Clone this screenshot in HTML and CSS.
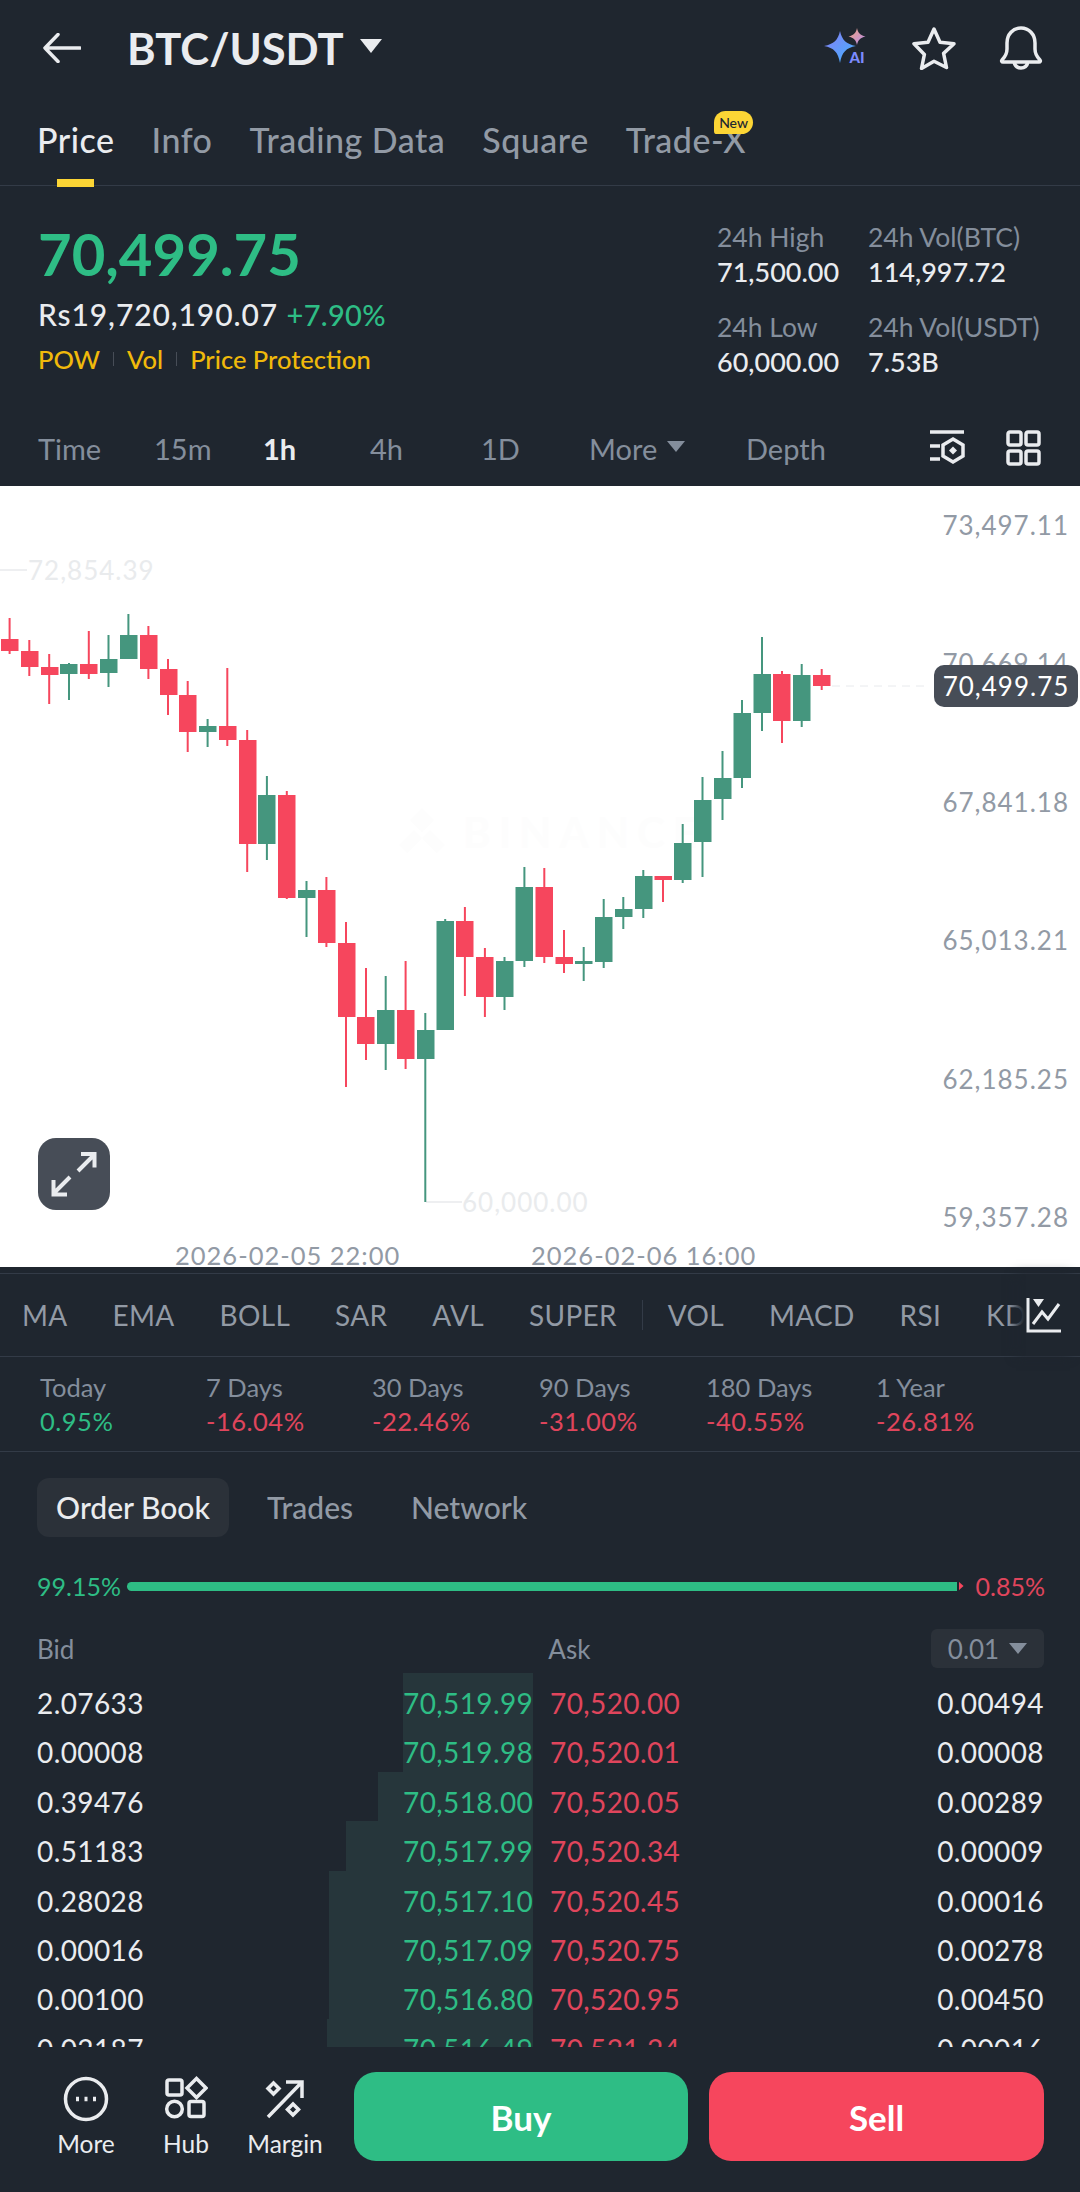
FILE: index.html
```html
<!DOCTYPE html>
<html lang="en">

<head>
    <meta charset="UTF-8">
    <meta name="viewport" content="width=device-width, initial-scale=1.0">
    <title>BTC/USDT</title>
    <link rel="stylesheet" href="styles.css">
</head>

<body>

    <header class="topbar">
        <svg class="back-icon" width="38" height="30" viewBox="0 0 38 30"><path d="M37 15H2M15 1.5L2 15l13 13.5"/></svg>
        <span class="pair">BTC/USDT</span>
        <span class="caret caret-pair"></span>
        <svg class="ai-icon" width="46" height="38" viewBox="0 0 46 38">
            <defs>
                <linearGradient id="sparkBig" x1="0" y1="0" x2="1" y2="1"><stop offset="0" stop-color="#8a7cf5"/><stop offset="1" stop-color="#3fb4ff"/></linearGradient>
                <linearGradient id="sparkSmall" x1="0" y1="0" x2="1" y2="1"><stop offset="0" stop-color="#f2a37c"/><stop offset="1" stop-color="#b58cf0"/></linearGradient>
            </defs>
            <path fill="url(#sparkBig)" d="M17 3c2 9 6 13 16 15-10 2-14 6-16 17-2-11-6-15-16-17 10-2 14-6 16-15z"/>
            <path fill="url(#sparkSmall)" d="M34 0c1 5 3 7 8.5 8.5-5.5 1.5-7.5 3.5-8.5 8.5-1-5-3-7-8.5-8.5 5.5-1.5 7.5-3.5 8.5-8.5z"/>
            <text class="ai-text" x="26.5" y="35">AI</text>
        </svg>
        <svg class="star-icon" width="46" height="44" viewBox="0 0 46 44"><path d="M23 3l6 13.2 14 1.6-10.4 9.6 2.9 14.1L23 35.3 10.5 42.5l2.9-14.1L3 17.8l14-1.6z"/></svg>
        <svg class="bell-icon" width="44" height="44" viewBox="0 0 44 44"><path d="M3 34c3-3 5-6 5-11v-6C8 8.5 14 2 22 2s14 6.5 14 15v6c0 5 2 8 5 11 .8 1 .2 2-1 2H4c-1.2 0-1.8-1-1-2zM15 36c1 4 4 6 7 6s6-2 7-6"/></svg>
    </header>

    <nav class="tabs">
        <span class="tab tab-active">Price</span>
        <span class="tab">Info</span>
        <span class="tab">Trading Data</span>
        <span class="tab">Square</span>
        <span class="tab tab-new">Trade-X<span class="new-badge">New</span></span>
    </nav>

    <section class="ticker">
        <div class="ticker-left">
            <div class="last-price">70,499.75</div>
            <div class="fiat">Rs19,720,190.07 <span class="fiat-change up">+7.90%</span></div>
            <div class="tags">
                <span>POW</span><i></i><span>Vol</span><i></i><span>Price Protection</span>
            </div>
        </div>
        <div class="stats">
            <div class="stat"><span>24h High</span><b>71,500.00</b></div>
            <div class="stat"><span>24h Vol(BTC)</span><b>114,997.72</b></div>
            <div class="stat"><span>24h Low</span><b>60,000.00</b></div>
            <div class="stat"><span>24h Vol(USDT)</span><b>7.53B</b></div>
        </div>
    </section>

    <section class="intervals">
        <span>Time</span>
        <span>15m</span>
        <span class="interval-active">1h</span>
        <span>4h</span>
        <span>1D</span>
        <span class="interval-more">More<span class="caret caret-more"></span></span>
        <span>Depth</span>
        <svg class="tool-icon tool-settings" width="38" height="36" viewBox="0 0 38 36"><path d="M1 2h34M1 16h10M1 29h10"/><path d="M24 9l10 6v11l-10 6-10-6V15z"/><path class="fill" d="M24 16.5l4 4-4 4-4-4z"/></svg>
        <svg class="tool-icon" width="36" height="36" viewBox="0 0 36 36"><rect x="2" y="2" width="13" height="13" rx="2"/><rect x="20" y="2" width="13" height="13" rx="2"/><rect x="2" y="21" width="13" height="13" rx="2"/><rect x="20" y="21" width="13" height="13" rx="2"/></svg>
    </section>

    <section class="chart">
        <svg class="candles" width="1080" height="781" viewBox="0 486 1080 781">
            <!-- watermark -->
            <path class="mark" d="M422 808l12 12-12 12-12-12zM422 838l8-8 15 15-8 8-15-15-15 15-8-8 15-15z"/>
            <text class="mark-text" x="463" y="848">BINANCE</text>

            <!-- high / low markers -->
            <path class="ghost-line" d="M0 570h27M426 1202h36"/>
            <text class="ghost" x="28" y="580">72,854.39</text>
            <text class="ghost" x="462" y="1212">60,000.00</text>
            <path class="last-line" d="M832 686h96"/>

            <text class="date" x="175" y="1265">2026-02-05 22:00</text>
            <text class="date" x="531" y="1265">2026-02-06 16:00</text>

            <g class="down">
                <rect x="8.6" y="618" width="2" height="36"/><rect x="1" y="639" width="17.5" height="12"/>
                <rect x="28.3" y="640" width="2" height="36"/><rect x="21" y="651" width="17.5" height="16"/>
                <rect x="48.2" y="654" width="2" height="50"/><rect x="41" y="667" width="17.5" height="8"/>
                <rect x="87.8" y="631" width="2" height="48"/><rect x="80" y="664" width="17.5" height="10"/>
                <rect x="147.4" y="626" width="2" height="53"/><rect x="140" y="635" width="17.5" height="34"/>
                <rect x="167" y="659" width="2" height="56"/><rect x="160" y="669" width="17.5" height="26"/>
                <rect x="186.7" y="681" width="2" height="71"/><rect x="179" y="695" width="17.5" height="37"/>
                <rect x="226.3" y="668" width="2" height="78"/><rect x="219" y="726" width="17.5" height="14"/>
                <rect x="246.2" y="730" width="2" height="142"/><rect x="239" y="740" width="17.5" height="104"/>
                <rect x="285.8" y="791" width="2" height="108"/><rect x="278" y="795" width="17.5" height="103"/>
                <rect x="325.4" y="877" width="2" height="70"/><rect x="318" y="890" width="17.5" height="53"/>
                <rect x="345" y="922" width="2" height="165"/><rect x="338" y="943" width="17.5" height="74"/>
                <rect x="365" y="968" width="2" height="92"/><rect x="357" y="1017" width="17.5" height="27"/>
                <rect x="404.6" y="961" width="2" height="108"/><rect x="397" y="1010" width="17.5" height="49"/>
                <rect x="463.9" y="907" width="2" height="89"/><rect x="456" y="921" width="17.5" height="36"/>
                <rect x="483.9" y="948" width="2" height="69"/><rect x="476" y="957" width="17.5" height="40"/>
                <rect x="543.3" y="868" width="2" height="95"/><rect x="535.5" y="887" width="17.5" height="70"/>
                <rect x="563" y="930" width="2" height="43"/><rect x="555.5" y="957" width="17.5" height="7"/>
                <rect x="662" y="876" width="2" height="26"/><rect x="654.5" y="876" width="17.5" height="4"/>
                <rect x="781" y="671" width="2" height="72"/><rect x="773" y="674" width="17.5" height="47"/>
                <rect x="820.7" y="669" width="2" height="21"/><rect x="813" y="675" width="17.5" height="11"/>
            </g>
            <g class="rise">
                <rect x="68" y="663" width="2" height="37"/><rect x="60" y="664" width="17.5" height="10"/>
                <rect x="107.5" y="635" width="2" height="52"/><rect x="100" y="659" width="17.5" height="14"/>
                <rect x="127.4" y="614" width="2" height="45"/><rect x="120" y="635" width="17.5" height="24"/>
                <rect x="206.6" y="719" width="2" height="28"/><rect x="199" y="726" width="17.5" height="6"/>
                <rect x="265.9" y="776" width="2" height="84"/><rect x="258" y="795" width="17.5" height="49"/>
                <rect x="305.5" y="881" width="2" height="56"/><rect x="298" y="890" width="17.5" height="8"/>
                <rect x="384.7" y="976" width="2" height="94"/><rect x="377" y="1010" width="17.5" height="34"/>
                <rect x="424.3" y="1013" width="2" height="189"/><rect x="417" y="1030" width="17.5" height="29"/>
                <rect x="444.2" y="919" width="2" height="111"/><rect x="436.5" y="921" width="17.5" height="109"/>
                <rect x="503.5" y="957" width="2" height="53"/><rect x="496" y="961" width="17.5" height="36"/>
                <rect x="523.4" y="867" width="2" height="100"/><rect x="515.5" y="887" width="17.5" height="74"/>
                <rect x="582.7" y="947" width="2" height="34"/><rect x="575" y="961" width="17.5" height="3"/>
                <rect x="602.7" y="899" width="2" height="69"/><rect x="595" y="917" width="17.5" height="45"/>
                <rect x="622.3" y="897" width="2" height="32"/><rect x="615" y="909" width="17.5" height="8"/>
                <rect x="642.3" y="870" width="2" height="48"/><rect x="635" y="876" width="17.5" height="33"/>
                <rect x="681.7" y="824" width="2" height="59"/><rect x="674" y="843" width="17.5" height="37"/>
                <rect x="701.5" y="777" width="2" height="100"/><rect x="694" y="800" width="17.5" height="42"/>
                <rect x="721.5" y="751" width="2" height="69"/><rect x="714" y="778" width="17.5" height="21"/>
                <rect x="741" y="700" width="2" height="88"/><rect x="733.5" y="713" width="17.5" height="65"/>
                <rect x="761" y="637" width="2" height="94"/><rect x="753.5" y="674" width="17.5" height="39"/>
                <rect x="800.7" y="664" width="2" height="63"/><rect x="793" y="675" width="17.5" height="46"/>
            </g>
        </svg>

        <div class="price-axis">
            <span>73,497.11</span>
            <span>70,669.14</span>
            <span>67,841.18</span>
            <span>65,013.21</span>
            <span>62,185.25</span>
            <span>59,357.28</span>
        </div>
        <div class="price-tag">70,499.75</div>

        <button class="expand">
            <svg width="46" height="46" viewBox="0 0 46 46"><path d="M27 20L43 4M30 3h13.5v13.5M19 26L3 42M2.5 29v14.5H16"/></svg>
        </button>
    </section>

    <section class="indicators">
        <div class="indicator-list">
            <span>MA</span><span>EMA</span><span>BOLL</span><span>SAR</span><span>AVL</span><span>SUPER</span>
            <i></i>
            <span>VOL</span><span>MACD</span><span>RSI</span><span>KDJ</span>
        </div>
        <div class="indicator-btn">
            <svg width="36" height="36" viewBox="0 0 36 36"><path d="M2 1v33h33"/><path d="M7 27l9-12 6 7 11-15"/><path class="fill" d="M7 2h11l-5.5 8z"/></svg>
        </div>
    </section>

    <section class="changes">
        <div class="change"><span>Today</span><b class="up">0.95%</b></div>
        <div class="change"><span>7 Days</span><b class="down-text">-16.04%</b></div>
        <div class="change"><span>30 Days</span><b class="down-text">-22.46%</b></div>
        <div class="change"><span>90 Days</span><b class="down-text">-31.00%</b></div>
        <div class="change"><span>180 Days</span><b class="down-text">-40.55%</b></div>
        <div class="change"><span>1 Year</span><b class="down-text">-26.81%</b></div>
    </section>

    <section class="book-tabs">
        <span class="book-tab book-tab-active">Order Book</span>
        <span class="book-tab">Trades</span>
        <span class="book-tab">Network</span>
    </section>

    <section class="ratio">
        <span class="up">99.15%</span>
        <div class="ratio-bar"><div class="ratio-fill"></div><div class="ratio-rest"></div></div>
        <span class="down-text">0.85%</span>
    </section>

    <section class="book-head">
        <span class="head-bid">Bid</span>
        <span class="head-ask">Ask</span>
        <span class="step">0.01<span class="caret caret-step"></span></span>
    </section>

    <section class="rows">
        <div class="row"><span class="depth" style="width: 130px"></span><span class="qty">2.07633</span><span class="bid">70,519.99</span><span class="ask">70,520.00</span><span class="qty-right">0.00494</span></div>
        <div class="row"><span class="depth" style="width: 130px"></span><span class="qty">0.00008</span><span class="bid">70,519.98</span><span class="ask">70,520.01</span><span class="qty-right">0.00008</span></div>
        <div class="row"><span class="depth" style="width: 155px"></span><span class="qty">0.39476</span><span class="bid">70,518.00</span><span class="ask">70,520.05</span><span class="qty-right">0.00289</span></div>
        <div class="row"><span class="depth" style="width: 187px"></span><span class="qty">0.51183</span><span class="bid">70,517.99</span><span class="ask">70,520.34</span><span class="qty-right">0.00009</span></div>
        <div class="row"><span class="depth" style="width: 204px"></span><span class="qty">0.28028</span><span class="bid">70,517.10</span><span class="ask">70,520.45</span><span class="qty-right">0.00016</span></div>
        <div class="row"><span class="depth" style="width: 204px"></span><span class="qty">0.00016</span><span class="bid">70,517.09</span><span class="ask">70,520.75</span><span class="qty-right">0.00278</span></div>
        <div class="row"><span class="depth" style="width: 204px"></span><span class="qty">0.00100</span><span class="bid">70,516.80</span><span class="ask">70,520.95</span><span class="qty-right">0.00450</span></div>
        <div class="row"><span class="depth" style="width: 206px"></span><span class="qty">0.02187</span><span class="bid">70,516.49</span><span class="ask">70,521.24</span><span class="qty-right">0.00016</span></div>
    </section>

    <footer class="actions">
        <div class="action action-more">
            <svg width="46" height="46" viewBox="0 0 46 46"><circle cx="23" cy="23" r="20.5"/><path class="dots" d="M13 23h3M21.5 23h3M30 23h3"/></svg>
            <span>More</span>
        </div>
        <div class="action action-hub">
            <svg width="44" height="44" viewBox="0 0 44 44"><rect x="3" y="3" width="15" height="15" rx="2"/><path d="M32.5 1.5l9.5 9.5-9.5 9.5L23 11z"/><circle cx="10.5" cy="32" r="7.8"/><rect x="25" y="24.5" width="15" height="15" rx="2"/></svg>
            <span>Hub</span>
        </div>
        <div class="action action-margin">
            <svg width="40" height="40" viewBox="0 0 40 40"><path d="M3 38L37 3M21 3h16v16"/><path d="M8.5 4l5.5 5.5-5.5 5.5L3 9.5zM28 25l5.5 5.5L28 36l-5.5-5.5z"/></svg>
            <span>Margin</span>
        </div>
        <button class="trade trade-buy">Buy</button>
        <button class="trade trade-sell">Sell</button>
    </footer>

</body>

</html>
```

FILE: styles.css
```css
* {
    box-sizing: border-box;
}

html,
body {
    margin: 0;
    padding: 0;
}

body {
    width: 1080px;
    height: 2192px;
    overflow: hidden;
    background-color: #1f262f;
    color: #eaecef;
    font-family: Lato, 'Open Sans', sans-serif;
    font-size: 26px;
}

svg {
    display: block;
    flex: none;
}

.up {
    color: #2ebd85;
}

.down-text {
    color: #e0455c;
}

.caret {
    display: inline-block;
    width: 0;
    height: 0;
    border-style: solid;
    border-color: #929aa5 transparent transparent transparent;
}

/* top bar */

.topbar {
    display: flex;
    align-items: center;
    height: 96px;
    padding-left: 43px;
}

.back-icon path {
    fill: none;
    stroke: #eaecef;
    stroke-width: 3.5;
    stroke-linecap: round;
    stroke-linejoin: round;
}

.pair {
    margin-left: 46px;
    font-size: 43.5px;
    font-weight: 700;
}

.caret-pair {
    margin-left: 16px;
    margin-top: -4px;
    border-width: 14px 11px 0 11px;
    border-top-color: #eaecef;
}

.ai-icon {
    margin-left: 441px;
    margin-top: -2px;
}

.ai-text {
    font-size: 15px;
    font-weight: 900;
    fill: #7c8bff;
}

.star-icon {
    margin-left: 42px;
}

.bell-icon {
    margin-left: 42px;
}

.star-icon path,
.bell-icon path {
    fill: none;
    stroke: #eaecef;
    stroke-width: 3.5;
    stroke-linejoin: round;
    stroke-linecap: round;
}

/* tabs */

.tabs {
    display: flex;
    gap: 37px;
    height: 90px;
    padding: 23px 0 0 37px;
    border-bottom: 1px solid #333b47;
}

.tab {
    position: relative;
    height: 67px;
    font-size: 34px;
    font-weight: 500;
    letter-spacing: 0.5px;
    color: #929aa5;
}

.tab-active {
    color: #eaecef;
}

.tab-active::after {
    content: "";
    position: absolute;
    left: 20px;
    bottom: -1px;
    width: 37px;
    height: 8px;
    background-color: #fcd535;
}

.new-badge {
    position: absolute;
    top: -8px;
    right: -7px;
    padding: 0 5px;
    height: 23px;
    line-height: 23px;
    letter-spacing: 0;
    border-radius: 12px 12px 12px 3px;
    background-color: #fcd535;
    color: #202630;
    font-size: 14px;
    font-weight: 500;
}

/* ticker */

.ticker {
    display: flex;
    justify-content: space-between;
    height: 224px;
    padding: 0 0 0 38px;
}

.last-price {
    margin-top: 32px;
    font-size: 58px;
    font-weight: 700;
    line-height: 72px;
    color: #2ebd85;
}

.fiat {
    margin-top: 4px;
    font-size: 30px;
    line-height: 40px;
    font-weight: 500;
    letter-spacing: 0.9px;
}

.fiat-change {
    font-size: 29px;
    letter-spacing: 0.3px;
}

.tags {
    display: flex;
    align-items: center;
    margin-top: 7px;
    font-size: 25.5px;
    line-height: 34px;
    font-weight: 500;
    color: #f0b90b;
}

.tags i {
    width: 1px;
    height: 14px;
    margin: 0 13px;
    background-color: #474d57;
}

.stats {
    display: grid;
    grid-template-columns: 151px 212px;
    grid-auto-rows: 90px;
    padding-top: 33px;
}

.stat span {
    display: block;
    font-size: 26.5px;
    line-height: 36px;
    color: #848e9c;
}

.stat b {
    display: block;
    font-size: 27px;
    line-height: 34px;
    font-weight: 500;
}

/* interval row */

.intervals {
    display: grid;
    grid-template-columns: 116px 109px 107px 111px 108px 157px 183px 77px auto;
    align-items: center;
    height: 76px;
    padding-left: 38px;
    font-size: 29px;
    color: #848e9c;
}

.interval-active {
    color: #eaecef;
    font-weight: 700;
}

.interval-more {
    display: flex;
    align-items: center;
}

.caret-more {
    margin-left: 10px;
    margin-top: -4px;
    border-width: 11px 9px 0 9px;
    border-top-color: #848e9c;
}

.tool-icon rect,
.tool-icon path {
    fill: none;
    stroke: #eaecef;
    stroke-width: 3.5;
}

.tool-icon .fill {
    fill: #eaecef;
    stroke: none;
}

/* chart */

.chart {
    position: relative;
    height: 781px;
    overflow: hidden;
    background-color: #fff;
}

.candles .down rect {
    fill: #f6465d;
}

.candles .rise rect {
    fill: #45967e;
}

.mark {
    fill: #fdfdfd;
}

.mark-text {
    font-size: 42px;
    font-weight: 700;
    letter-spacing: 8px;
    fill: #fdfdfd;
}

.ghost-line {
    stroke: #eeeff1;
    stroke-width: 2;
    fill: none;
}

.ghost {
    font-size: 26px;
    letter-spacing: 1px;
    fill: #e9ebed;
}

.last-line {
    stroke: #e8eaed;
    stroke-width: 1;
    stroke-dasharray: 8 6;
}

.date {
    font-size: 25.5px;
    letter-spacing: 1px;
    fill: #929aa5;
}

.price-axis {
    position: absolute;
    top: 21px;
    right: 11px;
    display: flex;
    flex-direction: column;
    gap: 102.4px;
    font-size: 26px;
    line-height: 36px;
    letter-spacing: 1px;
    color: #929aa5;
    text-align: right;
}

.price-tag {
    position: absolute;
    top: 179px;
    left: 934px;
    width: 144px;
    height: 42px;
    border-radius: 10px;
    background-color: #474d57;
    color: #fff;
    font-size: 26px;
    line-height: 42px;
    letter-spacing: 1px;
    text-align: center;
}

.expand {
    position: absolute;
    top: 652px;
    left: 38px;
    display: flex;
    align-items: center;
    justify-content: center;
    width: 72px;
    height: 72px;
    padding: 0;
    border: none;
    border-radius: 18px;
    background-color: #474d57;
}

.expand path {
    fill: none;
    stroke: #eaecef;
    stroke-width: 4;
}

/* indicators */

.indicators {
    position: relative;
    display: flex;
    align-items: center;
    height: 84px;
    margin-top: 6px;
    padding-left: 22px;
    border-top: 1px solid #333b47;
    border-bottom: 1px solid #333b47;
}

.indicator-list {
    display: flex;
    align-items: center;
    gap: 45px;
    font-size: 28px;
    letter-spacing: 0.3px;
    color: #929aa5;
    white-space: nowrap;
}

.indicator-list i {
    width: 1px;
    height: 30px;
    margin: 0 -20px;
    background-color: #333b47;
}

.indicator-btn {
    position: absolute;
    top: 0;
    bottom: 0;
    right: 0;
    display: flex;
    align-items: center;
    width: 54px;
    background-color: #1f262f;
    box-shadow: -10px 0 10px #1f262f;
}

.indicator-btn path {
    fill: none;
    stroke: #eaecef;
    stroke-width: 3;
}

.indicator-btn .fill {
    fill: #eaecef;
    stroke: none;
}

/* period changes */

.changes {
    display: grid;
    grid-template-columns: 166px 166px 167px 167px 170px auto;
    height: 95px;
    padding: 13px 0 0 40px;
    border-bottom: 1px solid #333b47;
}

.change span {
    display: block;
    font-size: 25.5px;
    line-height: 34px;
    color: #848e9c;
}

.change b {
    display: block;
    font-size: 25.5px;
    line-height: 34px;
    font-weight: 400;
    letter-spacing: 0.5px;
}

/* order book */

.book-tabs {
    display: flex;
    align-items: center;
    height: 59px;
    margin: 26px 0 0 37px;
}

.book-tab {
    padding: 0 29px;
    height: 59px;
    line-height: 59px;
    font-size: 30px;
    font-weight: 500;
    color: #929aa5;
}

.book-tab-active {
    width: 192px;
    margin-right: 9px;
    padding: 0;
    text-align: center;
    border-radius: 12px;
    background-color: #2b3139;
    color: #eaecef;
}

.ratio {
    display: flex;
    align-items: center;
    height: 40px;
    margin-top: 29px;
    padding: 0 35px 0 37px;
    font-size: 25px;
}

.ratio-bar {
    display: flex;
    flex: 1;
    height: 9px;
    margin: 0 12px 0 6px;
}

.ratio-fill {
    flex: 1;
    border-radius: 5px 0 0 5px;
    background-color: #2ebd85;
}

.ratio-rest {
    width: 5px;
    margin-left: 2px;
    background-color: #f6465d;
    clip-path: polygon(0 0, 100% 50%, 0 100%);
}

.book-head {
    display: flex;
    align-items: center;
    height: 39px;
    margin-top: 23px;
    padding: 0 36px 0 37px;
    font-size: 26px;
    color: #848e9c;
}

.head-ask {
    margin-left: 474px;
}

.step {
    display: flex;
    align-items: center;
    justify-content: center;
    gap: 10px;
    width: 113px;
    height: 39px;
    margin-left: auto;
    border-radius: 6px;
    background-color: #2b3139;
}

.caret-step {
    border-width: 11px 9px 0 9px;
    border-top-color: #848e9c;
}

.rows {
    height: 374px;
    margin-top: 5px;
    overflow: hidden;
}

.row {
    position: relative;
    display: flex;
    height: 49.4px;
    padding: 9px 36px 0 37px;
    font-size: 28px;
    letter-spacing: 0.4px;
    line-height: 42px;
}

.depth {
    position: absolute;
    top: 0;
    bottom: 0;
    right: 547px;
    background-color: #26363b;
}

.qty {
    position: relative;
    width: 366px;
}

.bid {
    position: relative;
    width: 130px;
    text-align: right;
    color: #2ebd85;
}

.ask {
    position: relative;
    margin-left: 17px;
    color: #e0455c;
}

.qty-right {
    position: relative;
    margin-left: auto;
}

/* bottom bar */

.actions {
    display: flex;
    height: 144px;
    padding: 25px 36px 0 0;
}

.action {
    display: flex;
    flex-direction: column;
    align-items: center;
    width: 90px;
    height: 96px;
    font-size: 24.5px;
    color: #eaecef;
}

.action svg {
    height: 46px;
    margin-top: 4px;
}

.action span {
    margin-top: 7px;
}

.action-more {
    margin-left: 41px;
}

.action-hub {
    margin-left: 10px;
}

.action-margin {
    margin-left: 9px;
}

.action circle,
.action rect,
.action path {
    fill: none;
    stroke: #eaecef;
    stroke-width: 3.5;
}

.action .dots {
    stroke-width: 4.5;
}

.trade {
    height: 89px;
    padding: 0;
    border: none;
    border-radius: 22px;
    color: #fff;
    font-family: Lato, 'Open Sans', sans-serif;
    font-size: 35px;
    font-weight: 700;
}

.trade-buy {
    width: 334px;
    margin-left: 24px;
    background-color: #2ebd85;
}

.trade-sell {
    width: 335px;
    margin-left: 21px;
    background-color: #f6465d;
}
```
